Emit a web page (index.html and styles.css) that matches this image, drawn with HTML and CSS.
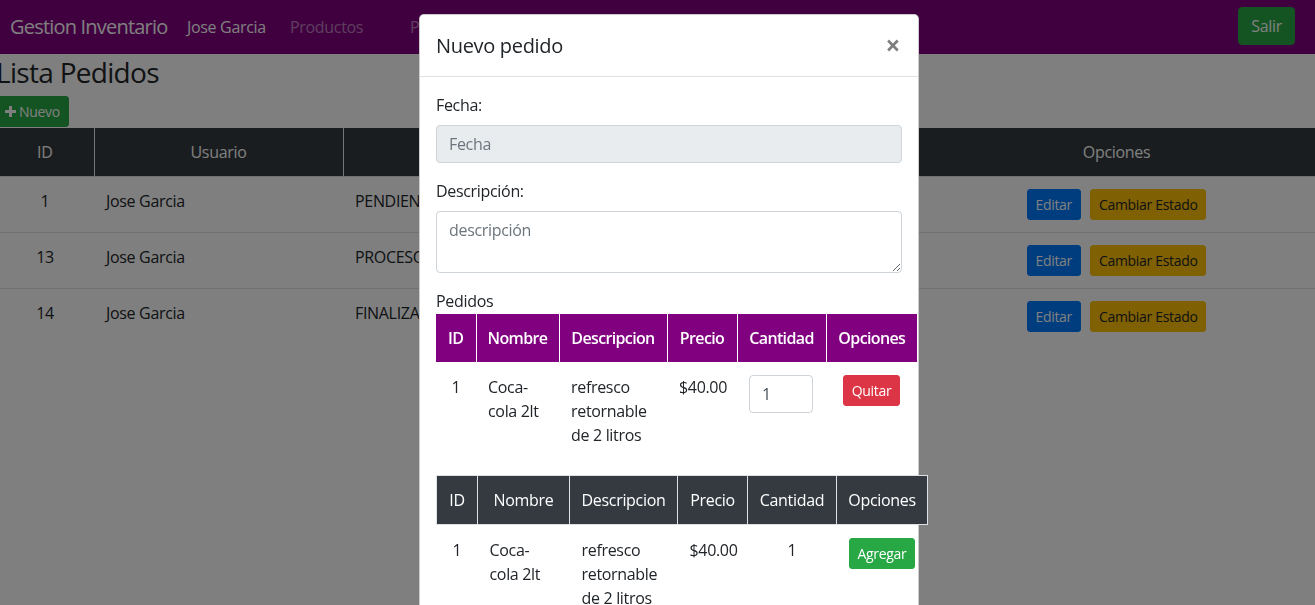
FILE: index.html
```html
<!DOCTYPE html>
<html lang="es">
<head>
<meta charset="utf-8">
<title>Gestion Inventario</title>
<link rel="stylesheet" href="styles.css">
</head>
<body>
<nav class="navbar">
  <span class="brand">Gestion Inventario</span>
  <ul class="nav">
    <li class="nav-item nav-user">Jose Garcia</li>
    <li class="nav-item nav-prod">Productos</li>
    <li class="nav-item nav-ped">Pedidos</li>
    <li class="nav-item">Usuarios</li>
  </ul>
  <button class="btn btn-success btn-exit">Salir</button>
</nav>

<main class="content">
  <h3 class="page-title">Lista Pedidos</h3>
  <div class="toolbar">
    <button class="btn btn-success btn-sm btn-new">
      <svg class="plus" viewBox="0 0 11 11" width="11" height="11"><path d="M4 0h3v4h4v3H7v4H4V7H0V4h4z" fill="currentColor"/></svg>
      Nuevo
    </button>
  </div>
  <table class="list-table">
    <colgroup>
      <col class="c-id"><col class="c-user"><col class="c-state"><col class="c-date"><col class="c-desc"><col class="c-opt">
    </colgroup>
    <thead>
      <tr><th>ID</th><th>Usuario</th><th>Estado</th><th>Fecha</th><th>Descripción</th><th>Opciones</th></tr>
    </thead>
    <tbody>
      <tr>
        <td class="center">1</td><td>Jose Garcia</td><td>PENDIENTE</td><td>2021-05-10</td><td>pedido semanal</td>
        <td><div class="actions"><button class="btn btn-sm btn-primary">Editar</button><button class="btn btn-sm btn-warning">Cambiar Estado</button></div></td>
      </tr>
      <tr>
        <td class="center">13</td><td>Jose Garcia</td><td>PROCESO</td><td>2021-05-12</td><td>pedido extra</td>
        <td><div class="actions"><button class="btn btn-sm btn-primary">Editar</button><button class="btn btn-sm btn-warning">Cambiar Estado</button></div></td>
      </tr>
      <tr>
        <td class="center">14</td><td>Jose Garcia</td><td>FINALIZADO</td><td>2021-05-14</td><td>pedido mensual</td>
        <td><div class="actions"><button class="btn btn-sm btn-primary">Editar</button><button class="btn btn-sm btn-warning">Cambiar Estado</button></div></td>
      </tr>
    </tbody>
  </table>
</main>

<div class="backdrop"></div>

<div class="modal">
  <div class="modal-header">
    <h5 class="modal-title">Nuevo pedido</h5>
    <span class="close">×</span>
  </div>
  <div class="modal-body">
    <div class="form-group">
      <label class="label">Fecha:</label>
      <input class="form-control" type="text" placeholder="Fecha" disabled>
    </div>
    <div class="form-group">
      <label class="label">Descripción:</label>
      <textarea class="form-control textarea" rows="2" placeholder="descripción"></textarea>
    </div>
    <div class="label">Pedidos</div>
    <table class="m-table t-selected">
      <colgroup>
        <col style="width:40px"><col style="width:83px"><col style="width:108px"><col style="width:70px"><col style="width:89px"><col style="width:91px">
      </colgroup>
      <thead>
        <tr><th>ID</th><th>Nombre</th><th>Descripcion</th><th>Precio</th><th>Cantidad</th><th>Opciones</th></tr>
      </thead>
      <tbody>
        <tr>
          <td class="center">1</td>
          <td>Coca-cola 2lt</td>
          <td>refresco retornable de 2 litros</td>
          <td>$40.00</td>
          <td class="qty-cell"><input class="form-control qty" type="text" value="1"></td>
          <td class="center"><button class="btn btn-sm btn-danger">Quitar</button></td>
        </tr>
      </tbody>
    </table>
    <table class="m-table t-products">
      <colgroup>
        <col style="width:41px"><col style="width:92px"><col style="width:108px"><col style="width:70px"><col style="width:89px"><col style="width:91px">
      </colgroup>
      <thead>
        <tr><th>ID</th><th>Nombre</th><th>Descripcion</th><th>Precio</th><th>Cantidad</th><th>Opciones</th></tr>
      </thead>
      <tbody>
        <tr>
          <td class="center">1</td>
          <td>Coca-cola 2lt</td>
          <td>refresco retornable de 2 litros</td>
          <td>$40.00</td>
          <td class="center">1</td>
          <td class="center"><button class="btn btn-sm btn-success">Agregar</button></td>
        </tr>
      </tbody>
    </table>
  </div>
</div>
</body>
</html>
```

FILE: styles.css
```css
* { box-sizing: border-box; }

html, body {
  margin: 0;
  overflow: hidden;
}

body {
  font-family: "Open Sans", "Noto Sans", sans-serif;
  font-size: 16px;
  line-height: 1.5;
  color: #212529;
  background: #fff;
  letter-spacing: -0.02em;
}

/* ---------- buttons ---------- */
.btn {
  display: inline-flex;
  align-items: center;
  justify-content: center;
  font-family: inherit;
  font-size: 16px;
  line-height: 24px;
  letter-spacing: inherit;
  padding: 6px 12px;
  border: 1px solid transparent;
  border-radius: 4px;
  color: #fff;
  cursor: pointer;
}
.btn-sm {
  font-size: 14px;
  line-height: 21px;
  padding: 4px 8px;
  border-radius: 3px;
}
.btn-success { background: #28a745; border-color: #28a745; }
.btn-primary { background: #007bff; border-color: #007bff; }
.btn-warning { background: #ffc107; border-color: #ffc107; color: #212529; }
.btn-danger  { background: #dc3545; border-color: #dc3545; }

/* ---------- navbar ---------- */
.navbar {
  display: flex;
  align-items: center;
  height: 54px;
  padding: 0 20px 0 10px;
  background: #800080;
}
.brand {
  font-size: 20px;
  line-height: 30px;
  color: #fff;
  width: 177px;
  letter-spacing: -0.04em;
}
.nav {
  display: flex;
  list-style: none;
  margin: 0;
  padding: 0;
  flex: 1;
}
.nav-item {
  color: rgba(255, 255, 255, 0.5);
  line-height: 24px;
  width: 120px;
}
.nav-user { color: #fff; width: 103px; }
.btn-exit { margin-top: -3px; }

/* ---------- content ---------- */
.content {
  margin-left: -4px;
}
.page-title {
  margin: 0 0 6px;
  padding-top: 2px;
  font-size: 28px;
  font-weight: 400;
  line-height: 1.2;
  letter-spacing: -0.025em;
}
.toolbar {
  display: flex;
  margin-bottom: 1px;
}
.btn-new {
  gap: 3px;
  height: 31px;
  padding-right: 8px;
}
.plus { display: block; }

.list-table {
  width: 1319px;
  table-layout: fixed;
  border-collapse: collapse;
}
.c-id { width: 98px; }
.c-user { width: 249px; }
.c-state { width: 217px; }
.c-date { width: 160px; }
.c-desc { width: 198px; }
.c-opt { width: 397px; }

.list-table th {
  background: #343a40;
  color: #fff;
  font-weight: 400;
  text-align: center;
  padding: 12px;
  height: 48px;
  border-left: 1px solid #e9ecef;
  border-right: 1px solid #e9ecef;
}
.list-table th:first-child { border-left: 0; }
.list-table td {
  padding: 12px;
  vertical-align: top;
  border-top: 1px solid #dee2e6;
  white-space: nowrap;
  overflow: hidden;
}
.center { text-align: center; }
.actions {
  display: flex;
  justify-content: center;
  gap: 9px;
}

/* ---------- backdrop & modal ---------- */
.backdrop {
  position: fixed;
  inset: 0;
  background: rgba(0, 0, 0, 0.5);
  z-index: 10;
}
.modal {
  position: fixed;
  top: 14px;
  left: 419px;
  width: 500px;
  height: 640px;
  background: #fff;
  border: 1px solid rgba(0, 0, 0, 0.2);
  border-radius: 5px;
  z-index: 20;
}
.modal-header {
  display: flex;
  align-items: flex-start;
  justify-content: space-between;
  padding: 16px 16px 15px;
  border-bottom: 1px solid #dee2e6;
}
.modal-title {
  margin: 0;
  font-size: 20px;
  font-weight: 500;
  line-height: 30px;
}
.close {
  font-size: 26px;
  font-weight: 700;
  line-height: 1;
  color: #000;
  opacity: 0.5;
  text-shadow: 0 1px 0 #fff;
  margin-top: 1px;
  margin-right: 2px;
}
.modal-body {
  padding: 16px;
}
.form-group { margin-bottom: 16px; }
.label {
  display: block;
  margin-bottom: 8px;
  padding-top: 1px;
  line-height: 23px;
}
div.label { margin-bottom: 0; }
.form-control {
  display: block;
  width: 100%;
  height: 38px;
  padding: 6px 12px;
  font-family: inherit;
  font-size: 16px;
  line-height: 24px;
  letter-spacing: inherit;
  color: #495057;
  background: #fff;
  border: 1px solid #ced4da;
  border-radius: 4px;
}
.form-control::placeholder { color: #6c757d; opacity: 1; }
.form-control:disabled { background: #e9ecef; }
.textarea {
  height: 62px;
  resize: vertical;
}

.m-table {
  table-layout: fixed;
  border-collapse: collapse;
  margin-bottom: 16px;
}
.t-selected { width: 481px; margin-top: 1px; }
.t-products { width: 491px; margin-top: 1px; }
.m-table th {
  padding: 12px 4px;
  height: 48px;
  color: #fff;
  text-align: center;
  white-space: nowrap;
}
.t-selected th {
  background: #800080;
  font-weight: 600;
  letter-spacing: -0.04em;
  border-left: 1px solid #fff;
}
.t-selected th:first-child { border-left: 0; }
.t-products th {
  background: #343a40;
  font-weight: 400;
  border: 1px solid #dee2e6;
}
.m-table td {
  padding: 13px 12px 12px;
  vertical-align: top;
}
.qty-cell { padding-top: 13px; }
.qty-cell .qty { width: 64px; color: #495057; }
.m-table td .btn { margin-top: 0; }
```
